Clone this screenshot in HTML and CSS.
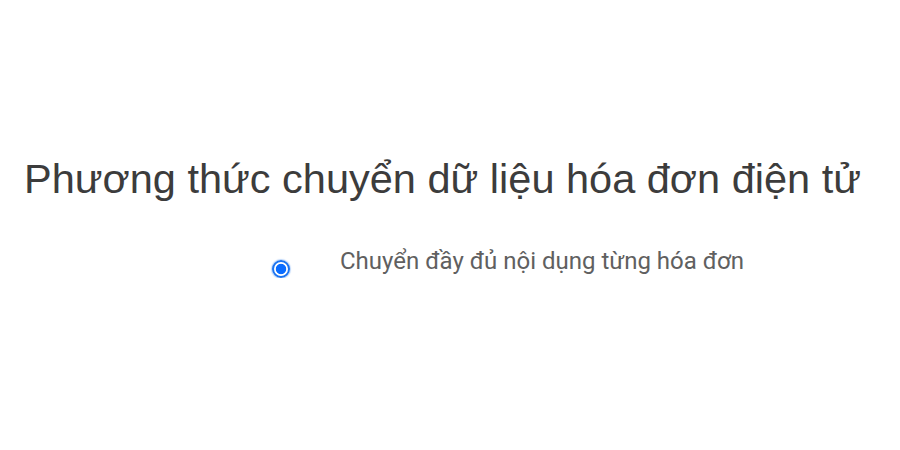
FILE: index.html
```html
<!DOCTYPE html>
<html lang="vi">
<head>
<meta charset="utf-8">
<link rel="stylesheet" href="styles.css">
</head>
<body>
<main class="page">
  <h1 class="title">Phương thức chuyển dữ liệu hóa đơn điện tử</h1>
  <div class="option-row">
    <label class="option">
      <span class="radio-col"><input type="radio" name="method" class="radio" checked></span>
      <span class="option-text">Chuyển đầy đủ nội dụng từng hóa đơn</span>
    </label>
  </div>
</main>
</body>
</html>
```
FILE: styles.css
```css
html, body {
  margin: 0;
  padding: 0;
  background: #ffffff;
}
.page {
  padding: 149px 0 0 24px;
}
.title {
  margin: 0;
  font-family: "Liberation Sans", Arial, sans-serif;
  font-weight: normal;
  font-size: 41.5px;
  line-height: 60px;
  color: #3c3c3c;
}
.option-row {
  display: flex;
  padding-left: 248px;
  margin-top: 38px;
}
.option {
  display: flex;
  align-items: flex-start;
  gap: 50px;
}
.radio-col {
  display: flex;
  padding-top: 13px;
}
.radio {
  -webkit-appearance: none;
  appearance: none;
  margin: 0;
  width: 18px;
  height: 18px;
  box-sizing: border-box;
  border-radius: 50%;
  border: 2px solid #1a73f0;
  background: radial-gradient(circle, #0a6cff 0 4.8px, #ffffff 5.6px);
  box-shadow: 0 0 1px 1px rgba(26, 115, 240, 0.3);
}
.option-text {
  font-family: Roboto, "Liberation Sans", sans-serif;
  font-size: 24px;
  line-height: 28px;
  color: #606060;
}
```
